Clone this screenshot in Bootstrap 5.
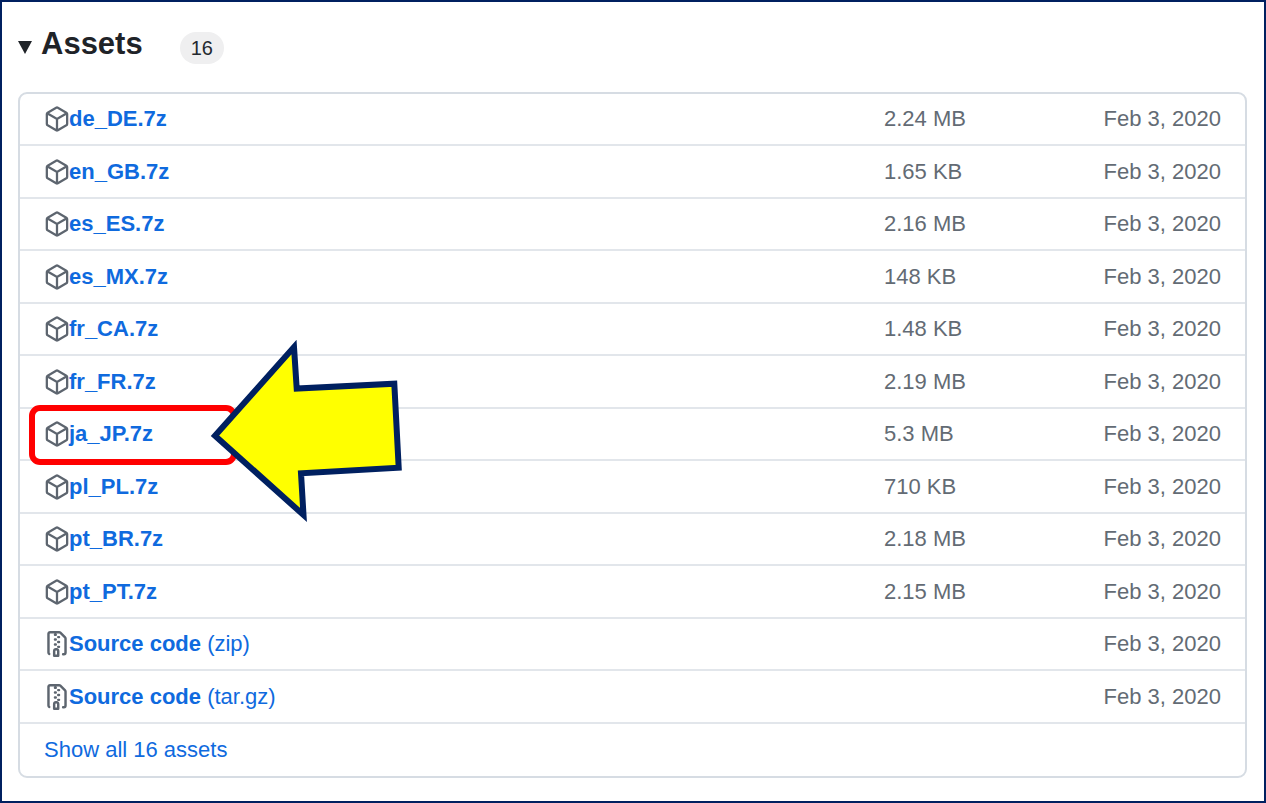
<!DOCTYPE html>
<html lang="en">
<head>
<meta charset="utf-8">
<meta name="viewport" content="width=device-width, initial-scale=1">
<title>Assets</title>
<link href="https://cdn.jsdelivr.net/npm/bootstrap@5.3.0/dist/css/bootstrap.min.css" rel="stylesheet">
<style>
  body { font-family: "Liberation Sans", Arial, sans-serif; font-size: 22px; line-height: 32px; color: #1f2328; }
  .page-frame { border: 2px solid #002060; padding: 26px 17px 16px 16px; }
  summary { list-style: none; margin-bottom: 28px; }
  summary::-webkit-details-marker { display: none; }
  .assets-title { font-size: 31px; line-height: 32px; margin-left: 9px; }
  .caret-down { width: 14px; height: 13px; margin-top: 13px; }
  .count-pill { font-size: 20px; line-height: 32px; font-weight: 400; padding: 0 11px; margin: 4px 0 0 37px; background: #efeff0; color: #24292f; }
  .asset-box { border: 2px solid #d6dce3; border-radius: 9px; }
  .asset-table { border-collapse: separate; border-spacing: 0; }
  .asset-table td { height: 52px; padding: 0 24px 0 0; border-bottom: 2px solid #e2e6eb; vertical-align: middle; color: #636b74; white-space: nowrap; }
  .asset-table tr:nth-child(even) td { height: 53px; }
  .asset-table td:first-child { padding-left: 24px; }
  .asset-table tr:last-child td { border-bottom: 0; }
  .size-col { width: 162px; }
  .date-col { width: 199px; }
  .asset-table a { color: #0f6ade; text-decoration: none; }
  .asset-table a:hover { text-decoration: underline; }
  .file-icon { width: 26px; height: 26px; fill: #5d656f; margin-right: -1px; }
  .pick-frame { left: 9px; top: -4px; width: 208px; height: 60px; border: 6px solid #f00; border-radius: 11px; pointer-events: none; }
  .pick-arrow { left: 185px; top: -74px; width: 205px; height: 190px; pointer-events: none; }
</style>
</head>
<body>
<svg class="d-none" aria-hidden="true">
  <symbol id="package" viewBox="0 0 16 16"><path d="M7.500 1.040a1 1 0 0 1 1 0l5.250 3.050a1 1 0 0 1 .5.860v6.100a1 1 0 0 1-.5.860L8.500 14.960a1 1 0 0 1-1 0l-5.250-3.050a1 1 0 0 1-.5-.860v-6.100a1 1 0 0 1 .5-.860zM2.200 4.600 8 8l5.800-3.400M8 8v7" fill="none" stroke="#5d656f" stroke-width="1.400"/></symbol>
  <symbol id="zip" viewBox="0 0 16 16"><path d="M3.5 1.75v11.5c0 .09.048.173.126.217a.75.75 0 0 1-.752 1.298A1.748 1.748 0 0 1 2 13.25V1.75C2 .784 2.784 0 3.75 0h5.586c.464 0 .909.185 1.237.513l2.914 2.914c.329.328.513.773.513 1.237v8.586A1.75 1.75 0 0 1 12.25 15h-.5a.75.75 0 0 1 0-1.5h.5a.25.25 0 0 0 .25-.25V4.664a.25.25 0 0 0-.073-.177L9.513 1.573a.25.25 0 0 0-.177-.073H7.25a.75.75 0 0 1 0 1.5h-.5a.75.75 0 0 1 0-1.5h-3a.25.25 0 0 0-.25.25Zm3.75 8.75h.5c.966 0 1.75.784 1.75 1.75v3a.75.75 0 0 1-.75.75h-2.5a.75.75 0 0 1-.75-.75v-3c0-.966.784-1.75 1.75-1.75ZM6 5.25a.75.75 0 0 1 .75-.75h.5a.75.75 0 0 1 0 1.5h-.5A.75.75 0 0 1 6 5.25Zm.75 2.25h.5a.75.75 0 0 1 0 1.5h-.5a.75.75 0 0 1 0-1.5ZM8 6.75A.75.75 0 0 1 8.75 6h.5a.75.75 0 0 1 0 1.5h-.5A.75.75 0 0 1 8 6.75ZM8.750 3h.5a.75.75 0 0 1 0 1.5h-.5a.75.75 0 0 1 0-1.5ZM8 9.750A.75.75 0 0 1 8.750 9h.5a.75.75 0 0 1 0 1.5h-.5A.75.75 0 0 1 8 9.750Zm-1 2.500v2.250h1v-2.250a.25.25 0 0 0-.25-.25h-.5a.25.25 0 0 0-.25.25Z"/></symbol>
</svg>
<main class="page-frame min-vh-100">
  <details open>
    <summary>
      <span class="d-flex align-items-start">
        <svg class="caret-down" viewBox="0 0 14 13" aria-hidden="true"><path d="M0 0h14L7 13z" fill="#1f2328"/></svg>
        <span class="assets-title fw-bold" role="heading" aria-level="2">Assets</span>
        <span class="count-pill rounded-pill">16</span>
      </span>
    </summary>
    <div class="asset-box">
      <table class="asset-table w-100">
        <colgroup><col class="name-col"><col class="size-col"><col class="date-col"></colgroup>
        <tbody>
          <tr><td><div class="d-flex align-items-center"><svg class="file-icon" aria-hidden="true"><use href="#package"/></svg><a href="#" class="fw-bold">de_DE.7z</a></div></td><td>2.24 MB</td><td class="text-end">Feb 3, 2020</td></tr>
          <tr><td><div class="d-flex align-items-center"><svg class="file-icon" aria-hidden="true"><use href="#package"/></svg><a href="#" class="fw-bold">en_GB.7z</a></div></td><td>1.65 KB</td><td class="text-end">Feb 3, 2020</td></tr>
          <tr><td><div class="d-flex align-items-center"><svg class="file-icon" aria-hidden="true"><use href="#package"/></svg><a href="#" class="fw-bold">es_ES.7z</a></div></td><td>2.16 MB</td><td class="text-end">Feb 3, 2020</td></tr>
          <tr><td><div class="d-flex align-items-center"><svg class="file-icon" aria-hidden="true"><use href="#package"/></svg><a href="#" class="fw-bold">es_MX.7z</a></div></td><td>148 KB</td><td class="text-end">Feb 3, 2020</td></tr>
          <tr><td><div class="d-flex align-items-center"><svg class="file-icon" aria-hidden="true"><use href="#package"/></svg><a href="#" class="fw-bold">fr_CA.7z</a></div></td><td>1.48 KB</td><td class="text-end">Feb 3, 2020</td></tr>
          <tr><td><div class="d-flex align-items-center"><svg class="file-icon" aria-hidden="true"><use href="#package"/></svg><a href="#" class="fw-bold">fr_FR.7z</a></div></td><td>2.19 MB</td><td class="text-end">Feb 3, 2020</td></tr>
          <tr><td class="position-relative"><div class="d-flex align-items-center"><svg class="file-icon" aria-hidden="true"><use href="#package"/></svg><a href="#" class="fw-bold">ja_JP.7z</a></div>
            <span class="pick-frame position-absolute"></span>
            <svg class="pick-arrow position-absolute" viewBox="0 0 205 190" aria-hidden="true"><path d="M10 100.700 89 12l2.700 41.500 97.600-4.800 4.400 84-97.700 5.600 2.500 41.700z" fill="#ff0" stroke="#002060" stroke-width="6" stroke-miterlimit="10"/></svg>
          </td><td>5.3 MB</td><td class="text-end">Feb 3, 2020</td></tr>
          <tr><td><div class="d-flex align-items-center"><svg class="file-icon" aria-hidden="true"><use href="#package"/></svg><a href="#" class="fw-bold">pl_PL.7z</a></div></td><td>710 KB</td><td class="text-end">Feb 3, 2020</td></tr>
          <tr><td><div class="d-flex align-items-center"><svg class="file-icon" aria-hidden="true"><use href="#package"/></svg><a href="#" class="fw-bold">pt_BR.7z</a></div></td><td>2.18 MB</td><td class="text-end">Feb 3, 2020</td></tr>
          <tr><td><div class="d-flex align-items-center"><svg class="file-icon" aria-hidden="true"><use href="#package"/></svg><a href="#" class="fw-bold">pt_PT.7z</a></div></td><td>2.15 MB</td><td class="text-end">Feb 3, 2020</td></tr>
          <tr><td><div class="d-flex align-items-center"><svg class="file-icon" aria-hidden="true"><use href="#zip"/></svg><a href="#"><span class="fw-bold">Source code</span> (zip)</a></div></td><td></td><td class="text-end">Feb 3, 2020</td></tr>
          <tr><td><div class="d-flex align-items-center"><svg class="file-icon" aria-hidden="true"><use href="#zip"/></svg><a href="#"><span class="fw-bold">Source code</span> (tar.gz)</a></div></td><td></td><td class="text-end">Feb 3, 2020</td></tr>
          <tr><td colspan="3"><a href="#">Show all 16 assets</a></td></tr>
        </tbody>
      </table>
    </div>
  </details>
</main>
<script src="https://cdn.jsdelivr.net/npm/bootstrap@5.3.0/dist/js/bootstrap.bundle.min.js"></script>
</body>
</html>
